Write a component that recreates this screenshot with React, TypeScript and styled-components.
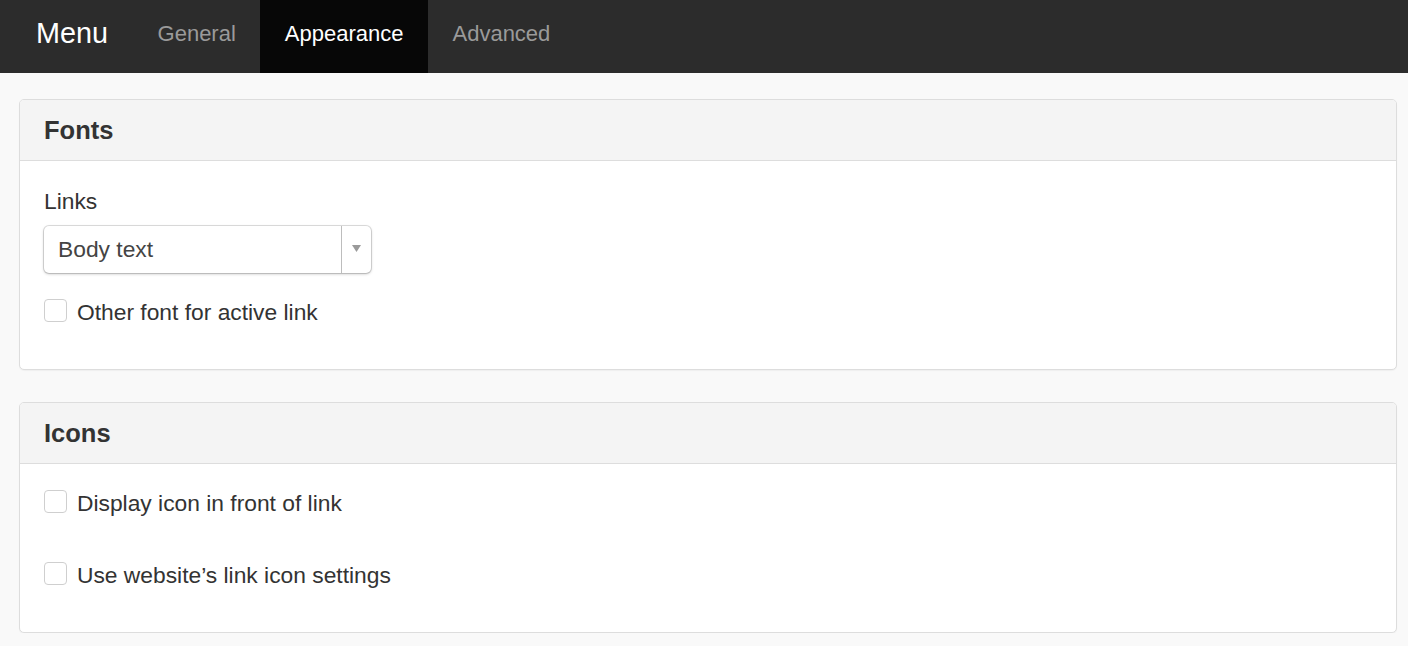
import React from "react";
import styled, { createGlobalStyle } from "styled-components";

const Global = createGlobalStyle`
  html, body { margin: 0; padding: 0; }
  body {
    background: #f9f9f9;
    font-family: "Liberation Sans", Arial, Helvetica, sans-serif;
    color: #333;
  }
`;

const NavBar = styled.nav`
  display: flex;
  align-items: stretch;
  height: 73px;
  background: #2c2c2c;
`;

const Brand = styled.div`
  display: flex;
  align-items: center;
  padding: 0 25px 0 36px;
  font-size: 28.8px;
  color: #fff;
  margin-top: -6px;
`;

const Tab = styled.a<{ $active?: boolean }>`
  display: flex;
  align-items: center;
  padding: 0 24.5px 6px;
  font-size: 22px;
  color: ${(p) => (p.$active ? "#fff" : "#9a9a9a")};
  background: ${(p) => (p.$active ? "#070707" : "transparent")};
  text-decoration: none;
  cursor: pointer;
`;

const Content = styled.main`
  display: flex;
  flex-direction: column;
  gap: 32px;
  padding: 26px 11px 0 19px;
`;

const Card = styled.section`
  background: #fff;
  border: 1px solid #dddddd;
  border-radius: 5px;
  box-shadow: 0 1px 1px rgba(0, 0, 0, 0.04);
  overflow: hidden;
`;

const CardHeader = styled.header`
  height: 60px;
  display: flex;
  align-items: center;
  padding: 0 24px;
  background: #f4f4f4;
  border-bottom: 1px solid #dddddd;
  font-size: 25.5px;
  font-weight: 700;
  color: #333;
`;

const CardBody = styled.div<{ $pt: number; $pb: number }>`
  display: flex;
  flex-direction: column;
  padding: ${(p) => p.$pt}px 24px ${(p) => p.$pb}px;
`;

const Label = styled.label`
  font-size: 22.8px;
  line-height: 30px;
`;

const Select = styled.div`
  margin-top: 10px;
  width: 327px;
  height: 47px;
  box-sizing: border-box;
  display: flex;
  align-items: stretch;
  border-radius: 5px;
  background: #fff;
  box-shadow: 0 0 0 1px rgba(0, 0, 0, 0.12), 0 1px 3px rgba(0, 0, 0, 0.25);
`;

const SelectValue = styled.div`
  flex: 1;
  display: flex;
  align-items: center;
  padding-left: 14px;
  font-size: 22.8px;
  color: #444;
  border-right: 1px solid #bdbdbd;
`;

const SelectArrow = styled.div`
  width: 29px;
  display: flex;
  align-items: center;
  justify-content: center;
  padding-bottom: 3px;
`;

const CheckRow = styled.div<{ $mt: number }>`
  display: flex;
  align-items: flex-start;
  gap: 10px;
  margin-top: ${(p) => p.$mt}px;
  font-size: 22.8px;
  line-height: 27px;
`;

const Box = styled.span`
  width: 23px;
  height: 23px;
  box-sizing: border-box;
  border: 1px solid #cfcfcf;
  border-radius: 4px;
  background: #fff;
  flex: none;
`;

export default function App() {
  return (
    <>
      <Global />
      <NavBar>
        <Brand>Menu</Brand>
        <Tab>General</Tab>
        <Tab $active>Appearance</Tab>
        <Tab>Advanced</Tab>
      </NavBar>
      <Content>
        <Card>
          <CardHeader>Fonts</CardHeader>
          <CardBody $pt={25} $pb={43}>
            <Label>Links</Label>
            <Select>
              <SelectValue>Body text</SelectValue>
              <SelectArrow>
                <svg width="9" height="7" viewBox="0 0 9 7">
                  <path d="M0 0 L9 0 L4.5 7 Z" fill="#9a9a9a" />
                </svg>
              </SelectArrow>
            </Select>
            <CheckRow $mt={26}>
              <Box />
              Other font for active link
            </CheckRow>
          </CardBody>
        </Card>
        <Card>
          <CardHeader>Icons</CardHeader>
          <CardBody $pt={26} $pb={43}>
            <CheckRow $mt={0}>
              <Box />
              Display icon in front of link
            </CheckRow>
            <CheckRow $mt={45}>
              <Box />
              Use website’s link icon settings
            </CheckRow>
          </CardBody>
        </Card>
      </Content>
    </>
  );
}
